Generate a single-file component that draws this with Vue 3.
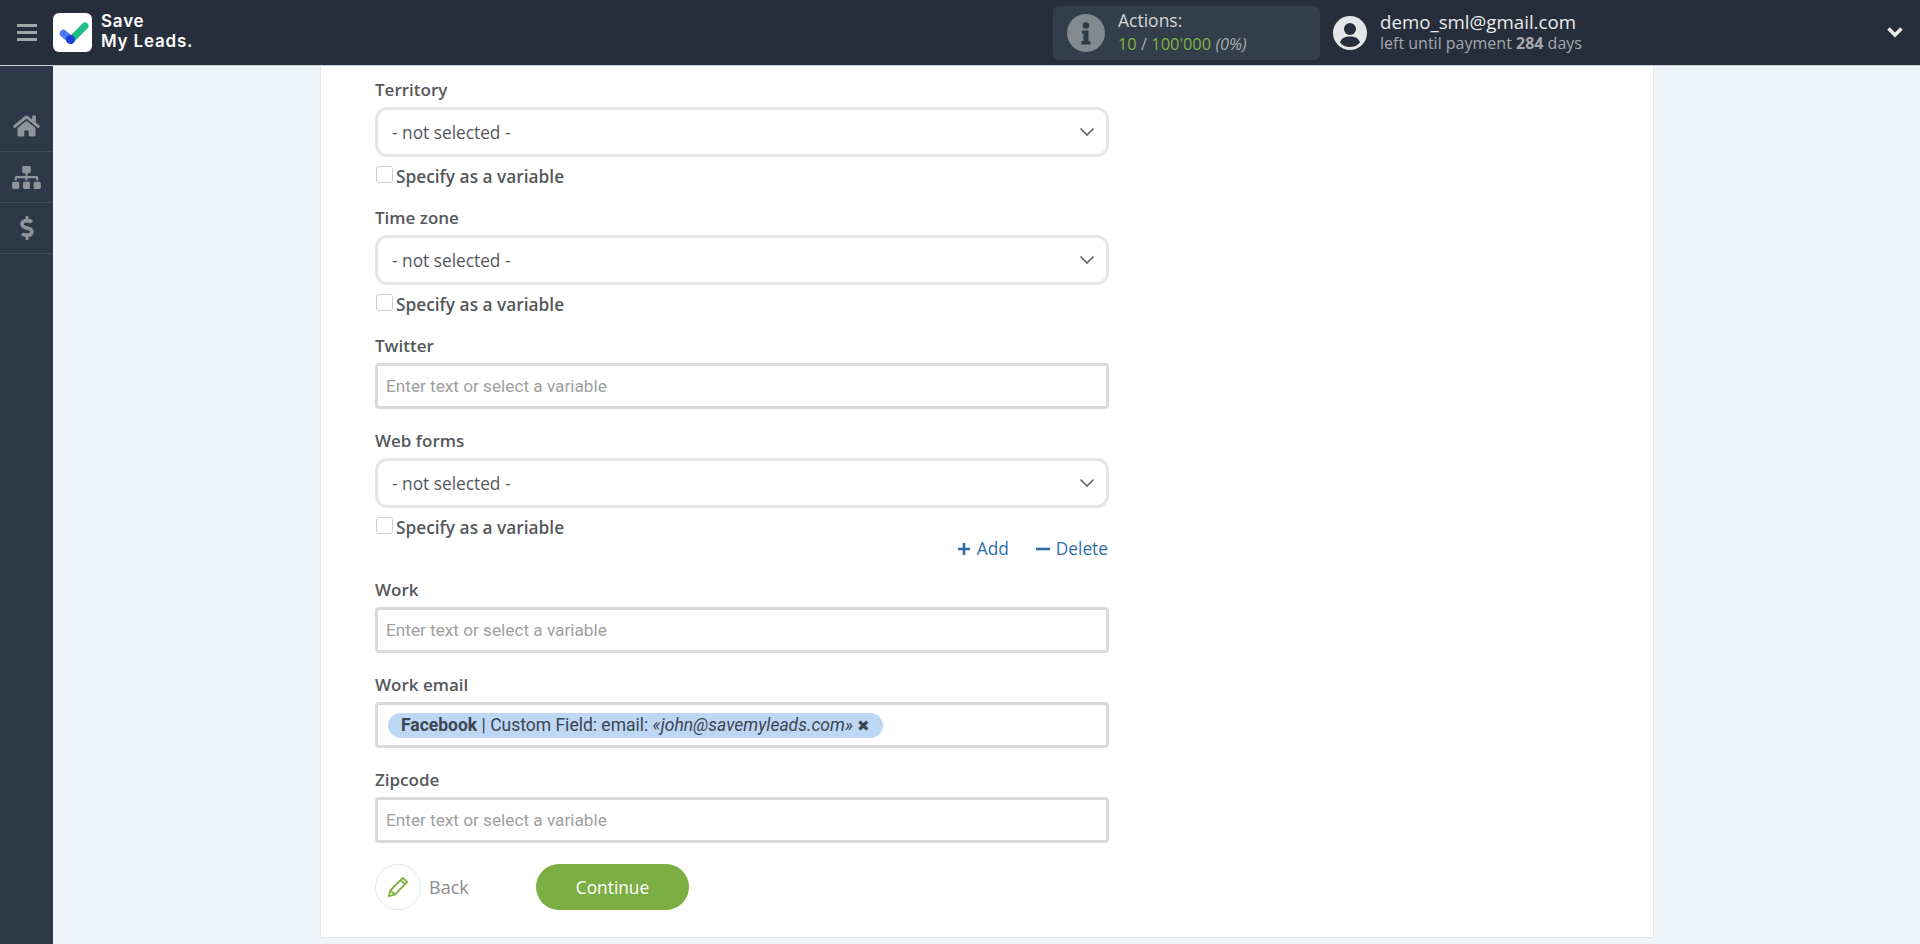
<script setup>
const fields = [
  { label: 'Territory', type: 'select', variable: true },
  { label: 'Time zone', type: 'select', variable: true },
  { label: 'Twitter', type: 'input' },
  { label: 'Web forms', type: 'select', variable: true, actions: true },
  { label: 'Work', type: 'input' },
  { label: 'Work email', type: 'tag' },
  { label: 'Zipcode', type: 'input' }
]
</script>

<template>
  <div class="page">
    <header class="topbar">
      <div class="burger"><i></i><i></i><i></i></div>
      <div class="logo">
        <svg viewBox="0 0 39 39" width="39" height="39">
          <rect width="39" height="39" rx="6" fill="#fff" />
          <path d="M18 27 L32 13" stroke="#21bd86" stroke-width="7" stroke-linecap="round" />
          <path d="M10.500 20.500 L17.500 26.500" stroke="#4a78f0" stroke-width="7.500" stroke-linecap="round" />
          <circle cx="17.500" cy="26.500" r="4.500" fill="#1f3fd6" />
        </svg>
      </div>
      <div class="brand"><span>Save</span><span>My Leads.</span></div>
      <div class="actions">
        <span class="info"><svg viewBox="0 0 38 38" width="38" height="38"><circle cx="19" cy="19" r="19" fill="#82898f" /><circle cx="19" cy="11.5" r="3.3" fill="#2f3b45" /><path d="M15 16.5h6.500v10.500h2v3.500h-9V27h2v-7h-1.500z" fill="#2f3b45" /></svg></span>
        <div class="actions-text">
          <div class="actions-title">Actions:</div>
          <div class="actions-count"><span class="green">10</span><span class="slash"> / </span><span class="green">100'000</span> <em>(0%)</em></div>
        </div>
      </div>
      <div class="user">
        <svg viewBox="0 0 34 34" width="34" height="34"><circle cx="17" cy="17" r="17" fill="#e4e6e8" /><circle cx="17" cy="13" r="6" fill="#272e3b" /><path d="M7 26.500c1.500-4.500 5-6 10-6s8.500 1.500 10 6c-2.500 3-6 4.500-10 4.500s-7.500-1.500-10-4.500z" fill="#272e3b" /></svg>
        <div class="user-text">
          <div class="email">demo_sml@gmail.com</div>
          <div class="payment">left until payment <b>284</b> days</div>
        </div>
      </div>
      <svg class="top-chevron" viewBox="0 0 18 12" width="18" height="12"><path d="M2.500 2.500 9 9l6.500-6.500" fill="none" stroke="#e9ebed" stroke-width="3.600" /></svg>
    </header>
    <div class="body">
      <aside class="sidebar">
        <div class="side-item"><svg viewBox="0 0 576 512" width="27" height="24"><path d="M280.37 148.26L96 300.11V464a16 16 0 0 0 16 16l112.06-.29a16 16 0 0 0 15.92-16V368a16 16 0 0 1 16-16h64a16 16 0 0 1 16 16v95.64a16 16 0 0 0 16 16.05L464 480a16 16 0 0 0 16-16V300L295.67 148.26a12.19 12.19 0 0 0-15.3 0zM571.6 251.47L488 182.56V44.05a12 12 0 0 0-12-12h-56a12 12 0 0 0-12 12v72.61L318.47 43a48 48 0 0 0-61 0L4.34 251.47a12 12 0 0 0-1.6 16.9l25.5 31A12 12 0 0 0 45.15 301l235.22-193.74a12.19 12.19 0 0 1 15.3 0L530.9 301a12 12 0 0 0 16.9-1.6l25.5-31a12 12 0 0 0-1.7-16.93z" /></svg></div>
        <div class="side-item"><svg viewBox="0 0 640 512" width="29" height="23"><path d="M128 352H32c-17.67 0-32 14.33-32 32v96c0 17.67 14.33 32 32 32h96c17.67 0 32-14.33 32-32v-96c0-17.67-14.33-32-32-32zm-24-80h192v48h48v-48h192v48h48v-57.59c0-21.17-17.23-38.41-38.41-38.41H344v-64h40c17.67 0 32-14.33 32-32V32c0-17.67-14.33-32-32-32H256c-17.67 0-32 14.33-32 32v96c0 17.67 14.33 32 32 32h40v64H94.41C73.23 224 56 241.23 56 262.41V320h48v-48zm264 80h-96c-17.67 0-32 14.33-32 32v96c0 17.67 14.33 32 32 32h96c17.67 0 32-14.33 32-32v-96c0-17.67-14.33-32-32-32zm240 0h-96c-17.67 0-32 14.33-32 32v96c0 17.67 14.33 32 32 32h96c17.67 0 32-14.33 32-32v-96c0-17.67-14.33-32-32-32z" /></svg></div>
        <div class="side-item"><svg viewBox="0 0 288 512" width="14" height="24"><path d="M209.2 233.4l-108-31.6C88.7 198.2 80 186.5 80 173.5c0-16.3 13.2-29.5 29.5-29.5h66.3c12.2 0 24.2 3.7 34.2 10.5 6.1 4.1 14.3 3.1 19.5-2l34.8-34c7.1-6.9 6.1-18.4-1.8-24.5C238 74.8 207.4 64.1 176 64V16c0-8.8-7.2-16-16-16h-32c-8.8 0-16 7.2-16 16v48h-2.5C45.8 64-5.4 118.7.5 183.6c4.2 46.1 39.4 83.6 83.8 96.6l102.5 30c12.5 3.7 21.2 15.3 21.2 28.3 0 16.3-13.2 29.5-29.5 29.5h-66.3C100 368 88 364.3 78 357.5c-6.1-4.1-14.3-3.1-19.5 2l-34.8 34c-7.1 6.9-6.1 18.4 1.8 24.5 24.5 19.2 55.1 29.9 86.5 30v48c0 8.8 7.2 16 16 16h32c8.8 0 16-7.2 16-16v-48.2c46.6-.9 90.3-28.6 105.7-72.7 21.500-61.6-14.6-124.8-72.5-141.7z" /></svg></div>
      </aside>
      <main class="main">
        <section class="card">
          <div v-for="f in fields" :key="f.label" class="field" :class="'field-' + f.type">
            <label class="label">{{ f.label }}</label>
            <div v-if="f.type === 'select'" class="select">
              <span>- not selected -</span>
              <svg viewBox="0 0 16 10" width="16" height="10"><path d="M1.500 1.500 8 8l6.500-6.500" fill="none" stroke="#666" stroke-width="1.700" /></svg>
            </div>
            <div v-else-if="f.type === 'input'" class="input">Enter text or select a variable</div>
            <div v-else class="input tag-box">
              <span class="tag"><b>Facebook</b> | Custom Field: email: <em>«john@savemyleads.com»</em> <span class="tag-x">✖</span></span>
            </div>
            <div v-if="f.variable" class="variable"><span class="check"></span><span>Specify as a variable</span></div>
            <div v-if="f.actions" class="links">
              <span class="link"><svg viewBox="0 0 14 14" width="14" height="14"><path d="M7 1v12M1 7h12" stroke="#2f6ea9" stroke-width="2.600" fill="none" /></svg>Add</span>
              <span class="link"><svg viewBox="0 0 14 14" width="14" height="14"><path d="M0 7h14" stroke="#2f6ea9" stroke-width="2.600" fill="none" /></svg>Delete</span>
            </div>
          </div>
          <div class="buttons">
            <div class="back">
              <span class="back-circle"><svg viewBox="0 0 24 24" width="26" height="26"><path d="M3.500 20.500 5 15 16.500 3.500l4 4L9 19zM14.500 5.500l4 4M5 15l4 4" fill="none" stroke="#7cb043" stroke-width="1.700" stroke-linejoin="round" /></svg></span>
              <span class="back-text">Back</span>
            </div>
            <div class="continue">Continue</div>
          </div>
        </section>
      </main>
    </div>
  </div>
</template>

<style>
html, body { margin: 0; padding: 0; overflow: hidden; }
</style>

<style scoped>
.page { width: 1920px; height: 944px; display: flex; flex-direction: column; overflow: hidden; background: #f0f4fb; font-family: "Open Sans", sans-serif; }
.topbar { height: 66px; flex: none; background: #272e3b; display: flex; align-items: center; color: #fff; border-bottom: 1px solid #c9ced6; box-sizing: border-box; }
.burger { width: 20px; margin-left: 17px; display: flex; flex-direction: column; gap: 4px; }
.burger i { display: block; height: 3px; background: #a1a5aa; }
.logo { margin-left: 16px; height: 39px; }
.brand { margin: -3px 0 0 9px; width: 952px; display: flex; flex-direction: column; font-family: Inter, sans-serif; font-weight: 600; font-size: 17px; line-height: 20px; letter-spacing: .8px; color: #fff; }
.actions { width: 267px; height: 54px; background: #323f4a; border-radius: 6px; display: flex; align-items: center; padding-left: 14px; box-sizing: border-box; }
.info { height: 38px; }
.actions-text { margin: -1px 0 0 13px; line-height: 23px; color: #d3d6d9; }
.actions-title { font-size: 17.500px; }
.actions-count { font-size: 16.400px; }
.green { color: #7eb343; }
.slash { color: #a6abb0; }
.actions-count em { color: #a6abb0; }
.user { margin-left: 13px; display: flex; align-items: center; }
.user-text { margin: -2px 0 0 13px; }
.email { font-size: 18.700px; line-height: 23px; color: #e8eaec; }
.payment { font-size: 16px; line-height: 20px; color: #a4a8ae; }
.payment b { font-weight: 700; }
.top-chevron { position: absolute; left: 1886px; top: 26px; }
.body { flex: 1; display: flex; min-height: 0; }
.sidebar { width: 53px; flex: none; background: #2d3848; padding-top: 35px; box-sizing: border-box; }
.side-item { height: 50px; border-bottom: 1px solid #3f4a59; display: flex; align-items: center; justify-content: center; }
.side-item svg { fill: #8f949b; }
.main { flex: 1; padding-left: 267px; }
.card { width: 1334px; height: 872px; box-sizing: border-box; background: #fff; border: 1px solid #e4e8ee; border-top: 0; padding: 13px 0 0 54px; }
.field { width: 734px; }
.label { display: block; font-size: 17px; font-weight: 600; line-height: 22px; color: #55585c; margin-bottom: 6px; }
.select { height: 50px; box-sizing: border-box; border: 3px solid #e5e5e5; border-radius: 12px; display: flex; align-items: center; justify-content: space-between; padding: 0 11px 0 14px; font-size: 17.300px; color: #55585c; }
.input { height: 46px; box-sizing: border-box; border: 3px solid #dadada; border-radius: 4px; padding-left: 8px; display: flex; align-items: center; font-family: Roboto, sans-serif; font-size: 17.200px; color: #a0a0a0; }
.variable { display: flex; align-items: center; height: 26px; margin-top: 6px; font-size: 17.300px; font-weight: 600; color: #55585c; }
.check { width: 15px; height: 15px; border: 1px solid #cfcfcf; border-radius: 3px; margin: 0 3px 0 1px; position: relative; top: -2px; flex: none; }
.field-select { margin-bottom: 18px; }
.field-input { margin-bottom: 21px; }
.field-tag { margin-bottom: 21px; }
.links { display: flex; justify-content: flex-end; gap: 27px; margin: -5px 1px -1px 0; height: 27px; align-items: center; font-size: 17.300px; color: #2f6ea9; }
.link { display: flex; align-items: center; gap: 6px; }
.tag-box { padding-left: 10px; }
.tag { height: 25px; line-height: 25px; border-radius: 13px; background: #bdd7f5; padding: 0 13px; font-family: Roboto, sans-serif; font-size: 17.500px; color: #3c4652; white-space: nowrap; }
.tag b { font-weight: 700; }
.tag-x { font-size: 15px; color: #3c4652; }
.buttons { display: flex; align-items: center; margin-top: 4px; height: 46px; }
.back { display: flex; align-items: center; width: 161px; }
.back-circle { width: 46px; height: 46px; box-sizing: border-box; border: 1.500px solid #dfe6e9; border-radius: 50%; display: flex; align-items: center; justify-content: center; }
.back-text { margin-left: 8px; font-size: 18px; color: #8b8d8f; }
.continue { width: 153px; height: 46px; border-radius: 23px; background: #7cae43; color: #fff; font-size: 17.300px; display: flex; align-items: center; justify-content: center; }
</style>
